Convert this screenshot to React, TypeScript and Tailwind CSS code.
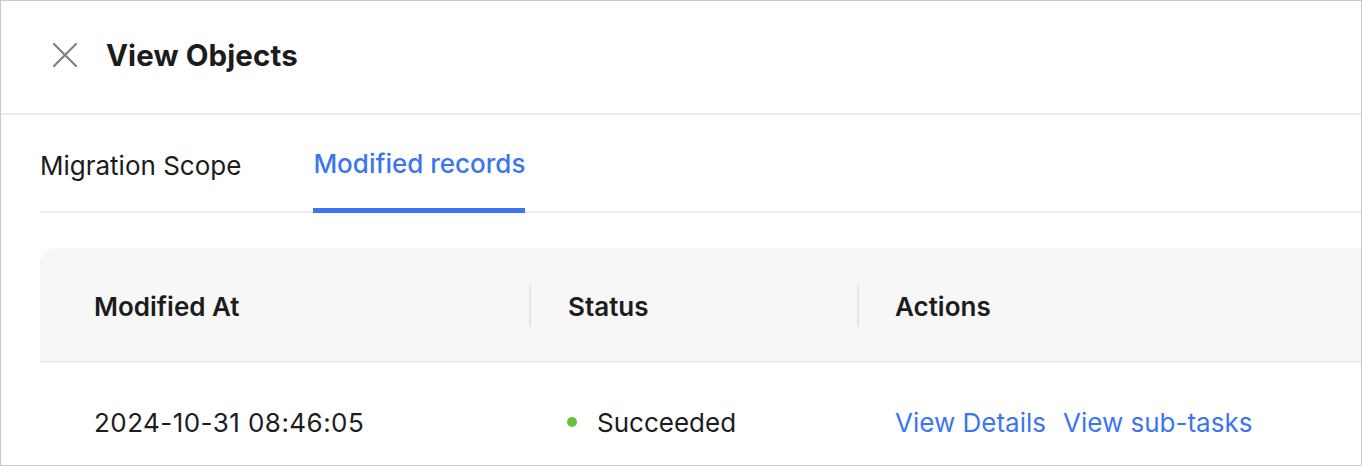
const CloseIcon = () => (
    <svg width="26" height="26" viewBox="0 0 26 26" fill="none" stroke="#808080" strokeWidth="2.2" strokeLinecap="round">
        <path d="M2 2L24 24M24 2L2 24" />
    </svg>
);

export default function App() {
    return (
        <div className="w-[1362px] h-[466px] overflow-hidden bg-white border border-[#c9c9c9] text-[#1c1c1c] [font-family:Inter,'Noto_Sans',sans-serif]">
            <header className="h-[114px] flex items-center pl-[51px] pb-[4px] border-b-2 border-[#ececec]">
                <CloseIcon />
                <h1 className="ml-[28px] text-[29.5px] font-bold tracking-[0.1px]">View Objects</h1>
            </header>
            <div className="pl-[39px]">
                <div className="flex h-[98px] border-b-2 border-[#ececec]">
                    <div className="flex items-center pt-[4px] text-[26px] pr-[72px]">Migration Scope</div>
                    <div className="flex items-center pt-[4px] text-[26px] text-[#3b76ef] font-medium border-b-[5px] border-[#3b76ef] -mb-[2px]">Modified records</div>
                </div>
                <div className="mt-[35px] rounded-tl-[16px] overflow-hidden">
                    <div className="flex h-[115px] items-center pt-[3px] bg-[#f7f7f7] border-b-2 border-[#ececec] text-[26px] font-semibold">
                        <div className="w-[491px] pl-[54px] flex items-center justify-between">
                            <span>Modified At</span>
                            <span className="w-[2px] h-[42px] bg-[#e6e6e6]" />
                        </div>
                        <div className="w-[328px] pl-[37px] flex items-center justify-between">
                            <span>Status</span>
                            <span className="w-[2px] h-[42px] bg-[#e6e6e6]" />
                        </div>
                        <div className="pl-[36px]">Actions</div>
                    </div>
                    <div className="flex h-[116px] items-center pt-[2px] text-[26px]">
                        <div className="w-[491px] pl-[54px] tracking-[0.45px]">2024-10-31 08:46:05</div>
                        <div className="w-[328px] pl-[36px] flex items-center">
                            <span className="shrink-0 w-[10px] h-[10px] rounded-full bg-[#6cc13b] mr-[20px]" />
                            <span>Succeeded</span>
                        </div>
                        <div className="pl-[36px] flex gap-[17px] text-[#3b76ef]">
                            <span>View Details</span>
                            <span>View sub-tasks</span>
                        </div>
                    </div>
                </div>
            </div>
        </div>
    );
}
